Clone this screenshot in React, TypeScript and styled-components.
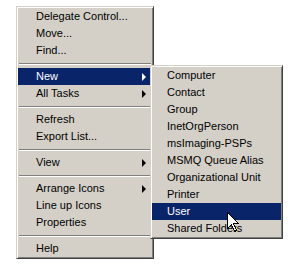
import React from 'react';
import styled, { createGlobalStyle } from 'styled-components';

type Entry = { label?: string; sub?: boolean; sep?: boolean; active?: boolean };

const mainItems: Entry[] = [
  { label: 'Delegate Control...' },
  { label: 'Move...' },
  { label: 'Find...' },
  { sep: true },
  { label: 'New', sub: true, active: true },
  { label: 'All Tasks', sub: true },
  { sep: true },
  { label: 'Refresh' },
  { label: 'Export List...' },
  { sep: true },
  { label: 'View', sub: true },
  { sep: true },
  { label: 'Arrange Icons', sub: true },
  { label: 'Line up Icons' },
  { label: 'Properties' },
  { sep: true },
  { label: 'Help' },
];

const newItems = [
  'Computer',
  'Contact',
  'Group',
  'InetOrgPerson',
  'msImaging-PSPs',
  'MSMQ Queue Alias',
  'Organizational Unit',
  'Printer',
  'User',
  'Shared Folders',
];

const App = () => {
  return (
    <Page>
      <GlobalStyle />
      <Menu $width={138}>
        {mainItems.map((item, i) =>
          item.sep ? (
            <Separator key={i} />
          ) : (
            <Item key={i} $active={item.active} $pad={18}>
              <Label>{item.label}</Label>
              {item.sub && <Arrow $active={item.active} />}
              {item.active && (
                <SubMenu>
                  <Menu $width={133}>
                    {newItems.map((label) => (
                      <Item key={label} $active={label === 'User'} $pad={15}>
                        <Label>{label}</Label>
                        {label === 'User' && <Cursor />}
                      </Item>
                    ))}
                  </Menu>
                </SubMenu>
              )}
            </Item>
          )
        )}
      </Menu>
    </Page>
  );
};

export default App;

const Cursor = () => (
  <CursorBox>
    <svg width="13" height="21" viewBox="0 0 13 21">
      <path
        d="M0.5 0.5 L0.5 16.5 L4.5 12.5 L7.5 19.5 L9.5 18.5 L6.5 11.5 L11.5 11.5 Z"
        fill="#fff"
        stroke="#000"
        strokeWidth="1"
        shapeRendering="crispEdges"
      />
    </svg>
  </CursorBox>
);

const GlobalStyle = createGlobalStyle`
  html, body {
    margin: 0;
    padding: 0;
    background: #ffffff;
  }
`;

const Page = styled.div`
  width: 294px;
  height: 276px;
  padding: 6px 0 0 16px;
  box-sizing: border-box;
  font-family: Tahoma, 'Liberation Sans', Arial, sans-serif;
  font-size: 11px;
`;

const Menu = styled.div<{ $width: number }>`
  width: ${(p) => p.$width}px;
  box-sizing: border-box;
  background: #d4d0c8;
  padding: 1px;
  border-top: 1px solid #d4d0c8;
  border-left: 1px solid #d4d0c8;
  border-right: 1px solid #404040;
  border-bottom: 1px solid #404040;
  box-shadow: inset 1px 1px 0 #ffffff, inset -1px -1px 0 #808080;
  display: flex;
  flex-direction: column;
`;

const Item = styled.div<{ $active?: boolean; $pad: number }>`
  position: relative;
  height: 17px;
  display: flex;
  align-items: center;
  padding-left: ${(p) => p.$pad}px;
  background: ${(p) => (p.$active ? '#0a246a' : 'transparent')};
  color: ${(p) => (p.$active ? '#ffffff' : '#000000')};
  white-space: nowrap;
`;

const Label = styled.span`
  flex: 1;
  line-height: 17px;
`;

const Arrow = styled.span<{ $active?: boolean }>`
  width: 0;
  height: 0;
  margin-right: 6px;
  border-top: 4px solid transparent;
  border-bottom: 4px solid transparent;
  border-left: 4px solid ${(p) => (p.$active ? '#ffffff' : '#000000')};
`;

const Separator = styled.div`
  height: 9px;
  display: flex;
  align-items: center;
  padding: 0 1px;

  &::after {
    content: '';
    flex: 1;
    border-top: 1px solid #808080;
    border-bottom: 1px solid #ffffff;
    box-sizing: border-box;
    height: 2px;
  }
`;

const SubMenu = styled.div`
  position: absolute;
  left: calc(100% - 2px);
  top: -3px;
  z-index: 2;
`;

const CursorBox = styled.div`
  position: absolute;
  left: 75px;
  top: 9px;
  line-height: 0;
  z-index: 3;
`;
